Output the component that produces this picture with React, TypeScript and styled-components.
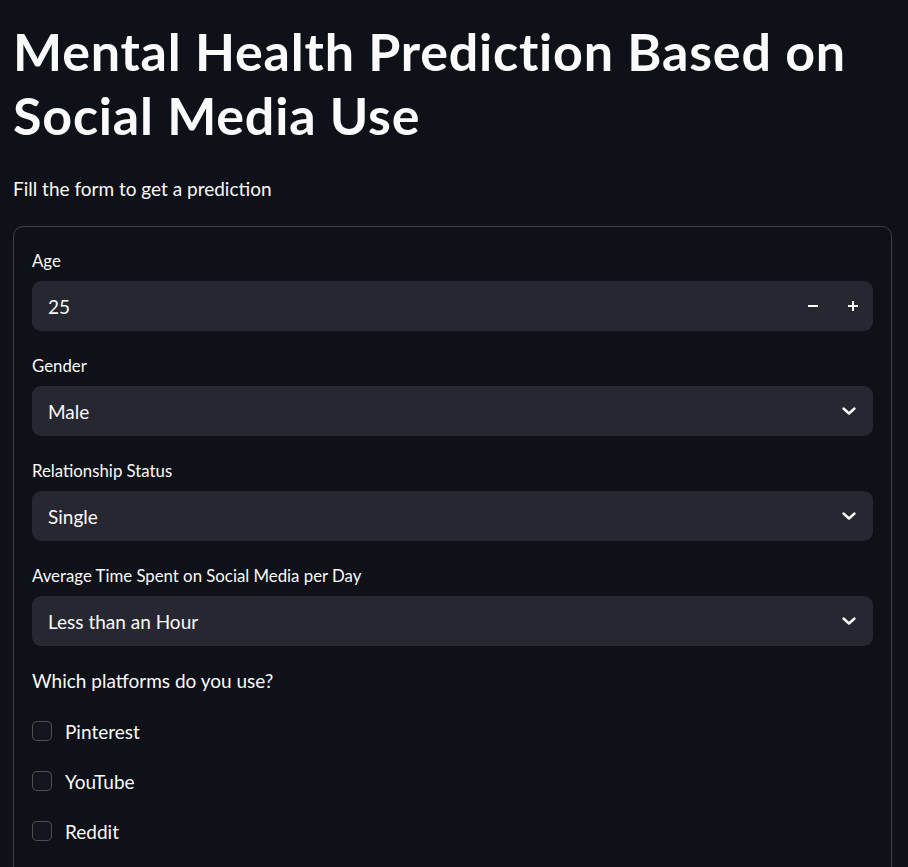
import React from "react";
import styled, { createGlobalStyle } from "styled-components";

const Global = createGlobalStyle`
  html, body { margin: 0; padding: 0; background: #0e1117; }
  body { font-family: "Lato", "Noto Sans", sans-serif; color: #fafafa; }
  * { box-sizing: border-box; }
`;

const Page = styled.main`
  padding: 19px 16px 0 13px;
  display: flex;
  flex-direction: column;
`;

const Title = styled.h1`
  margin: 0;
  font-size: 52px;
  line-height: 64px;
  font-weight: 700;
  letter-spacing: 0.8px;
`;

const Subtitle = styled.p`
  margin: 29px 0 0;
  font-size: 19px;
  line-height: 26px;
`;

const Card = styled.section`
  margin-top: 24px;
  border: 1px solid rgba(250, 250, 250, 0.2);
  border-radius: 10px;
  padding: 22px 18px 40px;
  display: flex;
  flex-direction: column;
  gap: 23px;
`;

const Field = styled.div`
  display: flex;
  flex-direction: column;
  gap: 8px;
`;

const Label = styled.label<{ $large?: boolean }>`
  font-size: ${(p) => (p.$large ? "19px" : "16.8px")};
  line-height: 24px;
  height: 24px;
  color: #fafafa;
`;

const Box = styled.div<{ $stepper?: boolean }>`
  height: 50px;
  background: #262730;
  border-radius: 9px;
  display: flex;
  align-items: center;
  padding: ${(p) => (p.$stepper ? "0 0 0 16px" : "0 16px")};
  font-size: 19px;
`;

const Value = styled.span`
  flex: 1;
`;

const StepBtn = styled.span`
  width: 40px;
  display: flex;
  justify-content: center;
  align-items: center;
`;

const Checks = styled.div`
  display: flex;
  flex-direction: column;
  gap: 20px;
  margin-top: 15px;
`;

const CheckRow = styled.label`
  display: flex;
  align-items: center;
  height: 30px;
  gap: 13px;
  font-size: 19px;
`;

const CheckBox = styled.span`
  width: 20px;
  height: 20px;
  border: 1px solid rgba(250, 250, 250, 0.25);
  border-radius: 5px;
  background: #13161e;
`;

const Chevron = () => (
  <svg width="16" height="16" viewBox="0 0 16 16" fill="none">
    <path d="M2.5 5.5 L8 10.5 L13.5 5.5" stroke="#fafafa" strokeWidth="2.4" strokeLinecap="round" strokeLinejoin="round" />
  </svg>
);

const Minus = () => (
  <svg width="12" height="12" viewBox="0 0 12 12">
    <rect x="1" y="5" width="10" height="2" fill="#fafafa" />
  </svg>
);

const Plus = () => (
  <svg width="12" height="12" viewBox="0 0 12 12">
    <rect x="1" y="5" width="10" height="2" fill="#fafafa" />
    <rect x="5" y="1" width="2" height="10" fill="#fafafa" />
  </svg>
);

const Select = ({ label, value }: { label: string; value: string }) => (
  <Field>
    <Label>{label}</Label>
    <Box>
      <Value>{value}</Value>
      <Chevron />
    </Box>
  </Field>
);

export default function App() {
  return (
    <>
      <Global />
      <Page>
        <Title>
          Mental Health Prediction Based on
          <br />
          Social Media Use
        </Title>
        <Subtitle>Fill the form to get a prediction</Subtitle>
        <Card>
          <Field>
            <Label>Age</Label>
            <Box $stepper>
              <Value>25</Value>
              <StepBtn>
                <Minus />
              </StepBtn>
              <StepBtn>
                <Plus />
              </StepBtn>
            </Box>
          </Field>
          <Select label="Gender" value="Male" />
          <Select label="Relationship Status" value="Single" />
          <Select label="Average Time Spent on Social Media per Day" value="Less than an Hour" />
          <Field>
            <Label $large>Which platforms do you use?</Label>
            <Checks>
              {["Pinterest", "YouTube", "Reddit"].map((p) => (
                <CheckRow key={p}>
                  <CheckBox />
                  {p}
                </CheckRow>
              ))}
            </Checks>
          </Field>
        </Card>
      </Page>
    </>
  );
}
